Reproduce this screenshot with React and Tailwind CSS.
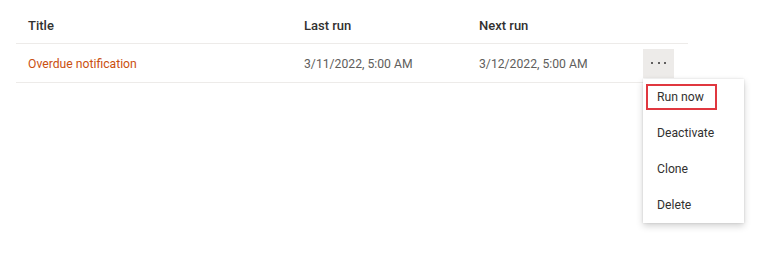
import React from "react";

const rows = [
  { title: "Overdue notification", lastRun: "3/11/2022, 5:00 AM", nextRun: "3/12/2022, 5:00 AM" },
];

const menuItems = ["Run now", "Deactivate", "Clone", "Delete"];

export default function App() {
  return (
    <div
      className="w-[758px] h-[255px] bg-white text-[12.2px] text-[#323130]"
      style={{ fontFamily: 'Roboto, "Open Sans", sans-serif' }}
    >
      <div className="ml-4 w-[672px]">
        {/* header */}
        <div className="flex h-[44px] items-center border-b border-[#edebe9] pt-[8px] text-[13px] font-medium">
          <div className="w-[288px] pl-3">Title</div>
          <div className="w-[175px]">Last run</div>
          <div className="w-[164px]">Next run</div>
        </div>

        {rows.map((r) => (
          <div key={r.title} className="flex h-[39px] items-center border-b border-[#edebe9]">
            <div className="w-[288px] pl-3 pt-[2px] text-[#ca5010]">{r.title}</div>
            <div className="w-[175px] pt-[2px] text-[#605e5c]">{r.lastRun}</div>
            <div className="w-[164px] pt-[2px] text-[#605e5c]">{r.nextRun}</div>
            <div className="relative">
              <button className="flex h-[29px] w-[31px] items-center justify-center gap-[4.5px] bg-[#edebe9]">
                <span className="h-[2px] w-[2px] rounded-full bg-[#323130]" />
                <span className="h-[2px] w-[2px] rounded-full bg-[#323130]" />
                <span className="h-[2px] w-[2px] rounded-full bg-[#323130]" />
              </button>
              {/* context menu */}
              <div className="absolute left-0 top-[30px] w-[101px] bg-white shadow-[0_3px_7px_rgba(0,0,0,0.18),0_0_2px_rgba(0,0,0,0.12)]">
                {menuItems.map((item, i) => (
                  <div key={item} className="flex h-[36px] items-center px-[3px] pt-[1px]">
                    <div
                      className={
                        i === 0
                          ? "flex h-[26px] w-[71px] items-center border-2 border-[#e0373f] pl-[9px]"
                          : "pl-[11px]"
                      }
                    >
                      {item}
                    </div>
                  </div>
                ))}
              </div>
            </div>
          </div>
        ))}
      </div>
    </div>
  );
}
